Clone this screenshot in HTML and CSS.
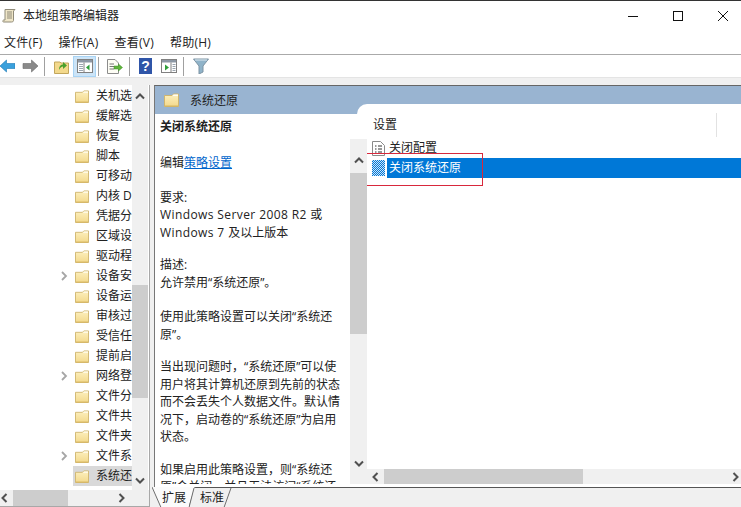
FILE: index.html
```html
<!DOCTYPE html>
<html lang="zh-CN">
<head>
<meta charset="utf-8">
<title>本地组策略编辑器</title>
<link rel="stylesheet" href="styles.css">
</head>
<body>
<svg class="defs" width="0" height="0" aria-hidden="true">
  <defs>
    <linearGradient id="fg" x1="0" y1="0" x2="0" y2="1"><stop offset="0" stop-color="#fdf0bf"/><stop offset="1" stop-color="#f3d98c"/></linearGradient>
    <symbol id="folder" viewBox="0 0 15 14">
      <path d="M.5 2.5V13.5H14.5V1H9.5L8 2.5Z" fill="url(#fg)" stroke="#cfb56f"/>
      <path d="M9.5 1.6H14V3H8.5Z" fill="#fff" opacity=".85"/>
      <path d="M1 13H14" stroke="#d6b65f"/>
    </symbol>
    <symbol id="chev-r" viewBox="0 0 8 10"><path d="M2 1 6 5 2 9" fill="none" stroke="#a6a6a6" stroke-width="1.8"/></symbol>
    <symbol id="arr-u" viewBox="0 0 10 7"><path d="M1 5.5 5 1.5 9 5.5" fill="none" stroke="#505050" stroke-width="2"/></symbol>
    <symbol id="arr-d" viewBox="0 0 10 7"><path d="M1 1.5 5 5.5 9 1.5" fill="none" stroke="#505050" stroke-width="2"/></symbol>
    <symbol id="arr-l" viewBox="0 0 7 10"><path d="M5.5 1 1.5 5 5.5 9" fill="none" stroke="#505050" stroke-width="2"/></symbol>
    <symbol id="arr-r" viewBox="0 0 7 10"><path d="M1.5 1 5.5 5 1.5 9" fill="none" stroke="#505050" stroke-width="2"/></symbol>
    <pattern id="dither" width="2" height="2" patternUnits="userSpaceOnUse"><rect width="2" height="2" fill="#0078d7"/><rect width="1" height="1" fill="#cfe4f7"/><rect x="1" y="1" width="1" height="1" fill="#cfe4f7"/></pattern>
  </defs>
</svg>

<div class="window">
  <header class="titlebar">
    <svg class="app-icon" width="14" height="15" viewBox="0 0 14 15"><path d="M3 1.5H13L11.5 3V12.5C11.5 13.5 10.5 14 9.5 14H1.5C.5 14 .5 12 1.8 12H3Z" fill="#efe6c8" stroke="#8f8a78"/><path d="M5 4H10M5 6H10M5 8H10M5 10H10" stroke="#8f8a78"/></svg>
    <span class="app-title">本地组策略编辑器</span>
    <div class="win-controls">
      <svg width="10" height="10" viewBox="0 0 10 10"><path d="M0 5.5H10" stroke="#111"/></svg>
      <svg width="10" height="10" viewBox="0 0 10 10"><rect x=".5" y=".5" width="9" height="9" fill="none" stroke="#111"/></svg>
      <svg width="10" height="10" viewBox="0 0 10 10"><path d="M0 0 10 10M10 0 0 10" stroke="#111"/></svg>
    </div>
  </header>

  <nav class="menubar">
    <span>文件(F)</span><span>操作(A)</span><span>查看(V)</span><span>帮助(H)</span>
  </nav>

  <div class="toolbar">
    <svg class="t-back" width="15" height="14" viewBox="0 0 15 14"><path d="M0 7 6.5 1V4.5H15V9.5H6.5V13Z" fill="#3aa0dc" stroke="#1d78b5" stroke-width=".6"/></svg>
    <svg class="t-fwd" width="16" height="14" viewBox="0 0 16 14"><path d="M16 7 9.5 1V4.5H1V9.5H9.5V13Z" fill="#8a8a8a" stroke="#6c6c6c" stroke-width=".6"/></svg>
    <i class="sep s1"></i>
    <svg class="t-up" width="15" height="15" viewBox="0 0 15 15"><path d="M.5 3H6L7 4H14.5V14.5H.5Z" fill="#f3d98c" stroke="#c2a65c"/><path d="M5 11C5 7 7 5.500 9 5.500V3L13 6.500 9 10V7.500C7.500 7.500 6 9 5 11Z" fill="#4aa02c"/></svg>
    <span class="t-active">
      <svg width="16" height="14" viewBox="0 0 16 14"><rect x=".5" y=".5" width="15" height="13" fill="#fff" stroke="#808080"/><rect x="1" y="1" width="14" height="2.500" fill="#8d98a5"/><path d="M7 3.500V13.500" stroke="#808080"/><path d="M2 5.500H6M2 7.500H6M2 9.500H6M2 11.500H6" stroke="#9aa5b0"/><path d="M12.500 5.500V11.500L9 8.500Z" fill="#2e9e3a"/></svg>
    </span>
    <i class="sep s2"></i>
    <svg class="t-export" width="16" height="15" viewBox="0 0 16 15"><path d="M.5.500H8L11.500 4V14.500H.5Z" fill="#fdfdf5" stroke="#8c8c8c"/><path d="M2.500 5H7M2.500 7.500H7M2.500 10H7" stroke="#777"/><path d="M7 7H11.500V5L15.500 8.500 11.500 12V10H7Z" fill="#5fb53c" stroke="#3f8f25" stroke-width=".5"/></svg>
    <i class="sep s3"></i>
    <svg class="t-help" width="13" height="16" viewBox="0 0 13 16"><rect width="13" height="16" fill="#2f55a8"/><text x="6.500" y="13" text-anchor="middle" class="help-q">?</text></svg>
    <svg class="t-panel" width="16" height="14" viewBox="0 0 16 14"><rect x=".5" y=".5" width="15" height="13" fill="#fff" stroke="#808080"/><rect x="1" y="1" width="14" height="2.500" fill="#8d98a5"/><path d="M10 3.500V13.500" stroke="#808080"/><path d="M11.500 5.500H14.500M11.500 7.500H14.500M11.500 9.500H14.500M11.500 11.500H14.500" stroke="#9aa5b0"/><path d="M4 5.500V11.500L8 8.500Z" fill="#2e9e3a"/></svg>
    <i class="sep s4"></i>
    <svg class="t-filter" width="16" height="16" viewBox="0 0 16 16"><path d="M.5 1H15.500L10 8V14L6 16V8Z" fill="#8fb3c9" stroke="#7d93a3"/><path d="M2 2H14" stroke="#dfeaf1"/></svg>
  </div>
  <div class="strip"></div>

  <main class="main">
    <section class="left-pane">
      <div class="tree-area">
        <ul class="tree">
          <li><svg class="folder"><use href="#folder"/></svg><span>关机选项</span></li>
          <li><svg class="folder"><use href="#folder"/></svg><span>缓解选项</span></li>
          <li><svg class="folder"><use href="#folder"/></svg><span>恢复</span></li>
          <li><svg class="folder"><use href="#folder"/></svg><span>脚本</span></li>
          <li><svg class="folder"><use href="#folder"/></svg><span>可移动存储访问</span></li>
          <li><svg class="folder"><use href="#folder"/></svg><span>内核 DMA 保护</span></li>
          <li><svg class="folder"><use href="#folder"/></svg><span>凭据分配</span></li>
          <li><svg class="folder"><use href="#folder"/></svg><span>区域设置服务</span></li>
          <li><svg class="folder"><use href="#folder"/></svg><span>驱动程序安装</span></li>
          <li class="has-kids"><svg class="chev"><use href="#chev-r"/></svg><svg class="folder"><use href="#folder"/></svg><span>设备安装</span></li>
          <li><svg class="folder"><use href="#folder"/></svg><span>设备运行状况证明服务</span></li>
          <li><svg class="folder"><use href="#folder"/></svg><span>审核过程创建</span></li>
          <li><svg class="folder"><use href="#folder"/></svg><span>受信任的平台模块服务</span></li>
          <li><svg class="folder"><use href="#folder"/></svg><span>提前启动反恶意软件</span></li>
          <li class="has-kids"><svg class="chev"><use href="#chev-r"/></svg><svg class="folder"><use href="#folder"/></svg><span>网络登录</span></li>
          <li><svg class="folder"><use href="#folder"/></svg><span>文件分类基础结构</span></li>
          <li><svg class="folder"><use href="#folder"/></svg><span>文件共享影子副本提供程序</span></li>
          <li><svg class="folder"><use href="#folder"/></svg><span>文件夹重定向</span></li>
          <li class="has-kids"><svg class="chev"><use href="#chev-r"/></svg><svg class="folder"><use href="#folder"/></svg><span>文件系统</span></li>
          <li class="selected"><svg class="folder"><use href="#folder"/></svg><span>系统还原</span></li>
        </ul>
        <div class="vscroll tree-scroll">
          <svg class="arrow"><use href="#arr-u"/></svg>
          <div class="track"><div class="thumb"></div></div>
          <svg class="arrow"><use href="#arr-d"/></svg>
        </div>
      </div>
      <div class="hscroll tree-h">
        <svg class="arrow-h"><use href="#arr-l"/></svg>
        <div class="track-h"><div class="thumb-h"></div></div>
        <svg class="arrow-h"><use href="#arr-r"/></svg>
      </div>
    </section>

    <section class="detail">
      <div class="detail-main">
        <div class="detail-head">
          <svg class="folder head-folder"><use href="#folder"/></svg>
          <span>系统还原</span>
        </div>
        <div class="detail-body">
          <article class="desc">
            <div class="desc-text">
              <p class="gap-title"><b>关闭系统还原</b></p>
              <p class="gap-wide">编辑<a href="#">策略设置</a></p>
              <p><span>要求:</span><br><span class="latin">Windows Server 2008 R2 </span>或<br><span class="latin">Windows 7 </span>及以上版本</p>
              <p class="gap-wide">描述:<br>允许禁用“系统还原”。</p>
              <p>使用此策略设置可以关闭“系统还<br>原”。</p>
              <p>当出现问题时，“系统还原”可以使<br>用户将其计算机还原到先前的状态<br>而不会丢失个人数据文件。默认情<br>况下，启动卷的“系统还原”为启用<br>状态。</p>
              <p>如果启用此策略设置，则“系统还<br>原”会关闭，并且无法访问“系统还</p>
            </div>
          </article>
          <div class="desc-scroll-col">
            <div class="vscroll desc-scroll">
              <svg class="arrow"><use href="#arr-u"/></svg>
              <div class="track"><div class="thumb"></div></div>
              <svg class="arrow"><use href="#arr-d"/></svg>
            </div>
          </div>
          <div class="settings">
            <div class="settings-head"><span>设置</span><i class="col-div"></i></div>
            <div class="setting-row">
              <svg width="13" height="15" viewBox="0 0 13 15"><path d="M.5.500H8.500L12.500 4.500V14.500H.5Z" fill="#fff" stroke="#8a8a8a"/><path d="M3 5H4.500M6 5H10M3 8H4.500M6 8H10M3 11H4.500M6 11H10" stroke="#333"/></svg>
              <span class="row-label">关闭配置</span>
            </div>
            <div class="setting-row active">
              <svg width="13" height="16" viewBox="0 0 13 16"><rect width="13" height="16" fill="url(#dither)"/></svg>
              <span class="row-label">关闭系统还原</span>
            </div>
            <div class="hscroll settings-h">
              <svg class="arrow-h"><use href="#arr-l"/></svg>
              <div class="track-h"><div class="thumb-h"></div></div>
              <svg class="arrow-h"><use href="#arr-r"/></svg>
            </div>
            <div class="red-mark"></div>
          </div>
        </div>
      </div>
      <div class="tabs">
        <div class="tab tab-ext">
          <svg class="tab-bg" width="44" height="21" viewBox="0 0 44 21"><path d="M0 0 9 20.500H37L43 0" fill="#fbfbfb" stroke="#6e6e6e"/></svg>
          <span>扩展</span>
        </div>
        <div class="tab tab-std">
          <svg class="tab-bg" width="46" height="21" viewBox="0 0 46 21"><path d="M5 1 0 20.500H35L42 1" fill="#f0f0f0" stroke="#6e6e6e"/></svg>
          <span>标准</span>
        </div>
      </div>
    </section>
  </main>
</div>
</body>
</html>
```

FILE: styles.css
```css
* { box-sizing: border-box; }
html, body { margin: 0; padding: 0; height: 100%; }
body {
  font-family: "Open Sans", "Noto Sans CJK SC", sans-serif;
  font-size: 12px;
  color: #222;
  background: #fff;
  overflow: hidden;
}
.defs { position: absolute; }
.window { display: flex; flex-direction: column; width: 741px; height: 507px; border-top: 1px solid #333; }

.titlebar { display: flex; align-items: center; height: 29px; padding-left: 2px; flex: none; }
.app-icon { margin-right: 7px; }
.app-title { line-height: 16px; }
.win-controls { margin-left: auto; display: flex; gap: 35px; padding-right: 13px; }

.menubar { display: flex; gap: 16px; align-items: center; padding-left: 4px; flex: none; border-bottom: 1px solid #aaa; height: 25px; }
.menubar span { letter-spacing: .25px; }

.toolbar { display: flex; align-items: center; height: 22px; flex: none; }
.toolbar > * { flex: none; }
.sep { display: block; width: 1px; height: 19px; background: #a0a0a0; }
.t-fwd { margin-left: 7px; }
.s1 { margin-left: 6px; }
.t-up { margin-left: 9px; }
.t-active { display: flex; align-items: center; justify-content: center; width: 23px; height: 21px; margin-left: 4px; background: #cce4f7; border: 1px solid #a8d4f5; }
.s2 { margin-left: 2px; }
.t-export { margin-left: 8px; }
.s3 { margin-left: 6px; }
.t-help { margin-left: 9px; }
.help-q { font: bold 14px "Liberation Sans", sans-serif; fill: #fff; }
.t-panel { margin-left: 9px; }
.s4 { margin-left: 6px; }
.t-filter { margin-left: 9px; }

.strip { height: 8px; flex: none; background: #f0f0f0; border-top: 1px solid #e4e4e4; }

.main { display: flex; flex: 1; min-height: 0; background: #f0f0f0; }

.left-pane { width: 150px; flex: none; display: flex; flex-direction: column; background: #fff; border-right: 1px solid #a8a8a8; border-bottom: 1px solid #a8a8a8; height: 422px; }
.tree-area { display: flex; flex: 1; min-height: 0; padding-right: 1px; }
.tree { list-style: none; margin: 0; padding: 1px 0 0; width: 132px; flex: none; overflow: hidden; }
.tree li { display: flex; align-items: center; height: 20px; padding-left: 75px; white-space: nowrap; position: relative; }
.tree li span { margin-left: 7px; line-height: 20px; }
.tree li.selected { background: linear-gradient(90deg, #fff 73px, #d9d9d9 73px); }
.folder { width: 14px; height: 13px; flex: none; }
.chev { position: absolute; left: 60px; top: 5px; width: 8px; height: 10px; }

.vscroll { display: flex; flex-direction: column; align-items: center; width: 16px; flex: none; background: #f0f0f0; }
.arrow { width: 10px; height: 7px; flex: none; }
.track { flex: 1; width: 100%; }
.thumb { background: #cdcdcd; width: 100%; }
.tree-scroll { padding: 8px 0 6px; }
.tree-scroll .track { padding-top: 185px; margin: 0; }
.tree-scroll .thumb { height: 113px; }

.hscroll { display: flex; align-items: center; flex: none; background: #f0f0f0; }
.arrow-h { width: 7px; height: 10px; flex: none; }
.track-h { flex: 1; height: 100%; }
.thumb-h { height: 100%; background: #cdcdcd; }
.tree-h { height: 16px; padding: 0 24px 0 1px; background: #f0f0f0; }
.tree-h .track-h { margin: 0 -22px 0 5px; }
.tree-h .thumb-h { width: 55px; }

.detail { flex: 1; min-width: 0; display: flex; flex-direction: column; margin-left: 4px; }
.detail-main { flex: none; border-left: 1px solid #777; border-top: 1px solid #666; }
.detail-head { display: flex; align-items: center; height: 28px; padding: 0 0 0 9px; background: #99b4d1; flex: none; color: #222; }
.head-folder { width: 15px; height: 14px; }
.detail-head span { margin-left: 11px; }

.detail-body { display: flex; height: 373px; background: #fff; border-bottom: 3px solid #fff; }
.desc { width: 195px; flex: none; overflow: hidden; }
.desc-text { padding: 4px 0 0 5px; line-height: 17.5px; width: 195px; }
.desc-text p { margin: 0 0 15px; white-space: nowrap; }
.desc-text p.gap-title { margin-bottom: 18.5px; }
.desc-text p.gap-wide { margin-bottom: 17px; }
.desc-text a { color: #0066cc; text-decoration: underline; }
.latin { letter-spacing: .4px; }
.desc-scroll-col { width: 17px; flex: none; position: relative; z-index: 2; padding-top: 25px; }
.desc-scroll { width: 17px; height: 345px; padding: 18px 0 17px; }
.desc-scroll .track { margin: 9px 0; }
.desc-scroll .thumb { height: 161px; }

.settings { flex: 1; min-width: 0; margin: -10px 0 0 -10px; background: #fff; border-top-left-radius: 10px; position: relative; z-index: 1; display: flex; flex-direction: column; }
.settings-head { display: flex; align-items: center; height: 34px; padding: 6px 0 0 16px; flex: none; position: relative; }
.col-div { position: absolute; left: 359px; top: 9px; width: 1px; height: 24px; background: #e2e2e2; }
.setting-row { display: flex; align-items: center; height: 20px; padding-left: 15px; flex: none; }
.setting-row:first-of-type { height: 21px; }
.row-label { margin-left: 2px; line-height: 20px; padding: 0 2px; }
.setting-row.active .row-label { color: #fff; flex: 1; background: #0078d7; }
.settings-h { height: 15px; margin-top: auto; margin-left: 10px; padding: 0 2px 0 5px; }
.settings-h .track-h { margin: 0 0 0 5px; }
.settings-h .thumb-h { width: 199px; }
.red-mark { position: absolute; left: 5px; top: 49px; width: 121px; height: 33px; border: 1px solid #d8283c; pointer-events: none; }

.tabs { display: flex; flex: none; height: 21px; background: #f0f0f0; border-top: 1px solid #555; position: relative; }
.tab { position: relative; height: 20px; }
.tab-bg { position: absolute; left: 0; top: -1px; }
.tab span { position: relative; line-height: 19px; display: block; }
.tab-ext { width: 37px; margin-left: -2px; padding-left: 10px; }
.tab-std { width: 40px; padding-left: 11px; }
```
